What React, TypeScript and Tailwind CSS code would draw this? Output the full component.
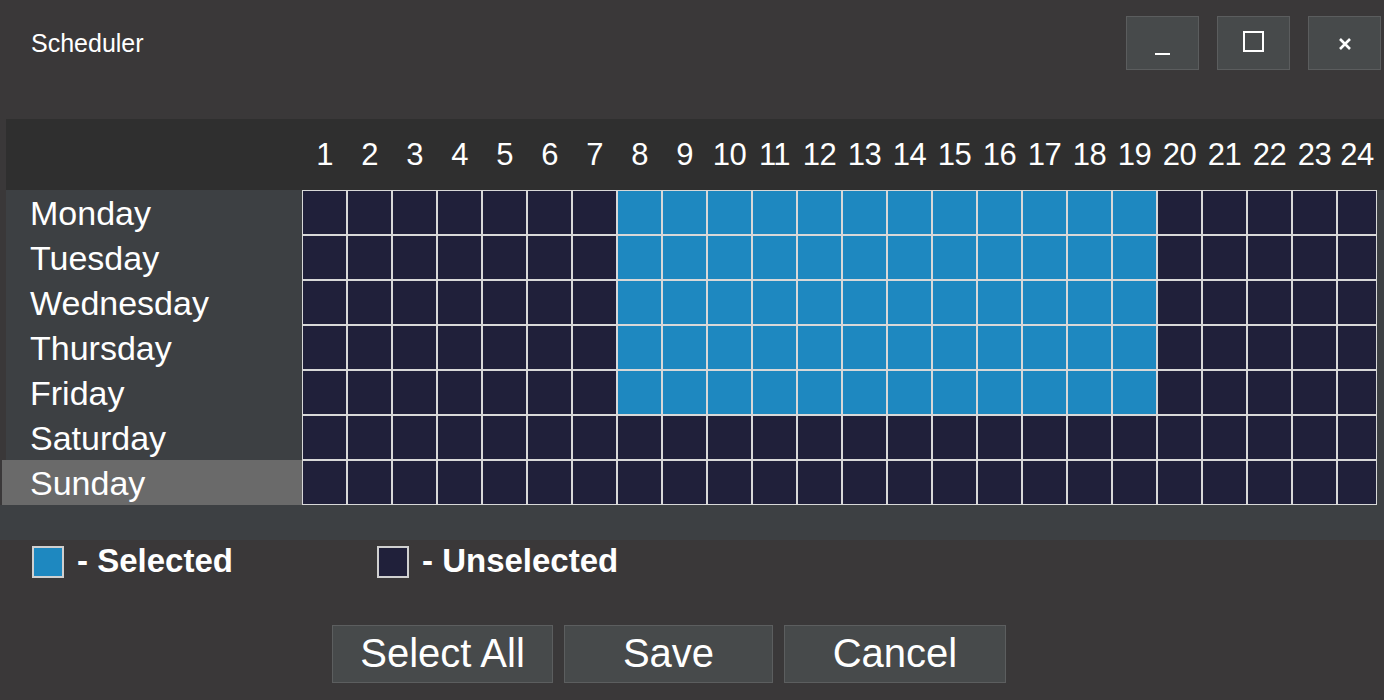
import React from "react";

const days = ["Monday", "Tuesday", "Wednesday", "Thursday", "Friday", "Saturday", "Sunday"];
const hours = Array.from({ length: 24 }, (_, i) => i + 1);

function isSel(d: number, h: number) {
  return d < 5 && h >= 8 && h <= 19;
}

export default function App() {
  return (
    <div
      className="w-[1384px] h-[700px] bg-[#3a3839] overflow-hidden flex flex-col text-white"
      style={{ fontFamily: '"Liberation Sans", Arial, sans-serif' }}
    >
      {/* Title bar */}
      <div className="h-[119px] flex items-start justify-between">
        <div className="pl-[31px] pt-[29px] text-[25px] leading-[28px]">Scheduler</div>
        <div className="flex gap-[18px] pt-[16px] pr-[3px]">
          <button className="w-[73px] h-[54px] bg-[#474a4b] border border-[#5b5d5e] flex items-center justify-center">
            <div className="w-[15px] h-[2px] bg-white mt-[22px]" />
          </button>
          <button className="w-[73px] h-[54px] bg-[#474a4b] border border-[#5b5d5e] flex items-center justify-center">
            <div className="w-[21px] h-[21px] border-2 border-white -mt-[4px]" />
          </button>
          <button className="w-[73px] h-[54px] bg-[#474a4b] border border-[#5b5d5e] flex items-center justify-center">
            <svg width="14" height="14" viewBox="0 0 14 14" className="mt-[2px]">
              <path d="M2 2 L12 12 M12 2 L2 12" stroke="white" strokeWidth="2.6" />
            </svg>
          </button>
        </div>
      </div>

      {/* Header numbers */}
      <div className="ml-[6px] h-[71px] bg-[#2f2f2f] flex">
        <div className="w-[296px]" />
        <div className="grid grid-cols-[repeat(23,43px)_38px] gap-x-[2px] px-[1px] items-center">
          {hours.map((h) => (
            <div key={h} className="text-center text-[31px] leading-[34px] pt-[1px] tracking-[-0.5px]">
              {h}
            </div>
          ))}
        </div>
      </div>

      {/* Grid area */}
      <div className="ml-[6px] bg-[#3d4043] flex">
        <div className="w-[296px] flex flex-col">
          {days.map((d, i) => (
            <div
              key={d}
              className={
                "h-[45px] flex items-center pl-[24px] text-[34px] leading-[36px] " +
                (i === 6 ? "bg-[#6a6a6a] -ml-[4px] pl-[28px]" : "")
              }
            >
              {d}
            </div>
          ))}
        </div>
        <div className="grid grid-cols-[repeat(23,43px)_38px] grid-rows-[repeat(7,43px)] gap-[2px] p-[1px] bg-[#d8d8d8] self-start">
          {days.map((d, di) =>
            hours.map((h) => (
              <div
                key={d + h}
                className={isSel(di, h) ? "bg-[#1e88c0]" : "bg-[#20203a]"}
              />
            ))
          )}
        </div>
      </div>
      <div className="h-[35px] bg-[#3d4043]" />

      {/* Legend */}
      <div className="h-[85px] flex items-start pt-[6px]">
        <div className="flex items-center ml-[32px] w-[345px]">
          <div className="w-[32px] h-[32px] bg-[#1e88c0] border-2 border-[#d0d0d0]" />
          <span className="ml-[13px] text-[33px] font-bold leading-[34px] -mt-[3px]">- Selected</span>
        </div>
        <div className="flex items-center">
          <div className="w-[32px] h-[32px] bg-[#20203a] border-2 border-[#d0d0d0]" />
          <span className="ml-[13px] text-[33px] font-bold leading-[34px] -mt-[3px]">- Unselected</span>
        </div>
      </div>

      {/* Buttons */}
      <div className="flex ml-[332px] gap-[11px]">
        <button className="w-[221px] h-[58px] bg-[#474a4b] border border-[#5c5e5f] text-[40px] leading-[42px] pb-[3px]">
          Select All
        </button>
        <button className="w-[209px] h-[58px] bg-[#474a4b] border border-[#5c5e5f] text-[40px] leading-[42px] pb-[3px]">
          Save
        </button>
        <button className="w-[222px] h-[58px] bg-[#474a4b] border border-[#5c5e5f] text-[40px] leading-[42px] pb-[3px]">
          Cancel
        </button>
      </div>
    </div>
  );
}
